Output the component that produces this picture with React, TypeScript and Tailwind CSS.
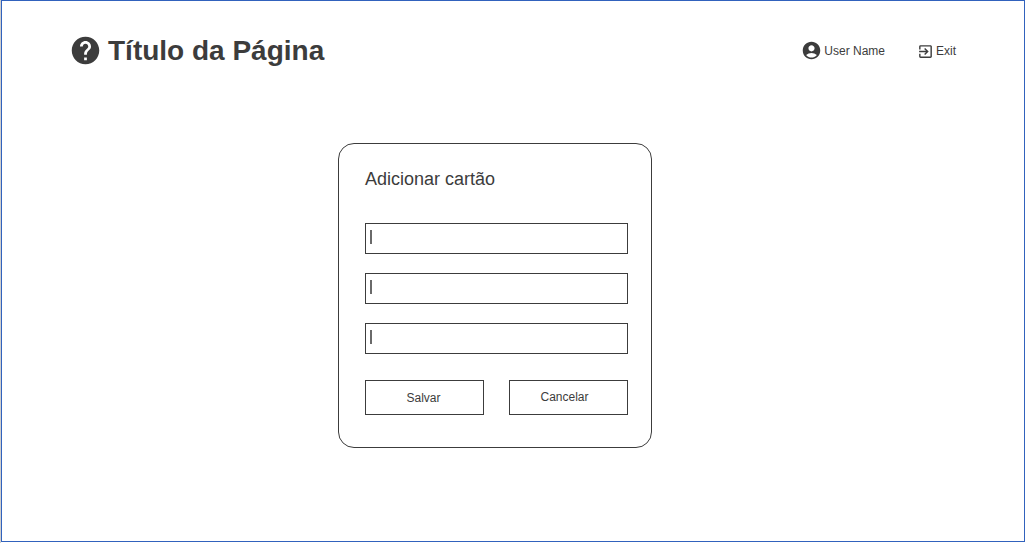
import { MdAccountCircle, MdExitToApp, MdHelp } from "react-icons/md";

const fields = ["Campo 1", "Campo 2", "Campo 3"];

function Header() {
  return (
    <header className="flex items-center justify-between pl-[67px] pr-[68px] pt-8">
      <div className="flex items-center gap-1.5">
        <button type="button" aria-label="Ajuda" className="pb-0.5">
          <MdHelp size={33} />
        </button>
        <h1 className="text-[28px] font-bold leading-9">Título da Página</h1>
      </div>
      <nav className="flex items-center gap-8 text-xs">
        <a href="#user" className="flex items-center gap-0.5">
          <MdAccountCircle size={21} className="mb-0.5" />
          User Name
        </a>
        <a href="#exit" className="flex items-center gap-0.5">
          <MdExitToApp size={17} />
          Exit
        </a>
      </nav>
    </header>
  );
}

function Field({ label }: { label: string }) {
  return (
    <div className="relative">
      <input
        type="text"
        aria-label={label}
        className="block h-[31px] w-full border border-[#3c3c3c] bg-white px-2 text-sm outline-none"
      />
      <span
        aria-hidden="true"
        className="pointer-events-none absolute left-[5px] top-[7px] h-[14px] w-0.5 bg-[#6a6a6a]"
      />
    </div>
  );
}

function CardForm() {
  return (
    <form
      className="w-full max-w-[314px] rounded-2xl border border-[#3c3c3c] pb-8 pl-[26px] pr-[23px] pt-[23px]"
      onSubmit={(event) => event.preventDefault()}
    >
      <h2 className="text-lg leading-6">Adicionar cartão</h2>
      <div className="mt-8 flex flex-col gap-[19px]">
        {fields.map((label) => (
          <Field key={label} label={label} />
        ))}
      </div>
      <div className="mt-[26px] grid grid-cols-2 gap-[25px] text-xs">
        <button type="submit" className="h-[35px] border border-[#3c3c3c] pr-0.5">
          Salvar
        </button>
        <button type="reset" className="h-[35px] border border-[#3c3c3c] pb-0.5 pr-2">
          Cancelar
        </button>
      </div>
    </form>
  );
}

export default function App() {
  return (
    <div className="min-h-screen border-l border-[#cfcfcf] bg-white pb-px font-['Liberation_Sans',Arial,sans-serif] text-[#3c3c3c]">
      <div className="flex min-h-[calc(100vh-1px)] flex-col border border-[#3162bd]">
        <Header />
        <main className="flex justify-center pb-8 pr-9 pt-[74px]">
          <CardForm />
        </main>
      </div>
    </div>
  );
}
